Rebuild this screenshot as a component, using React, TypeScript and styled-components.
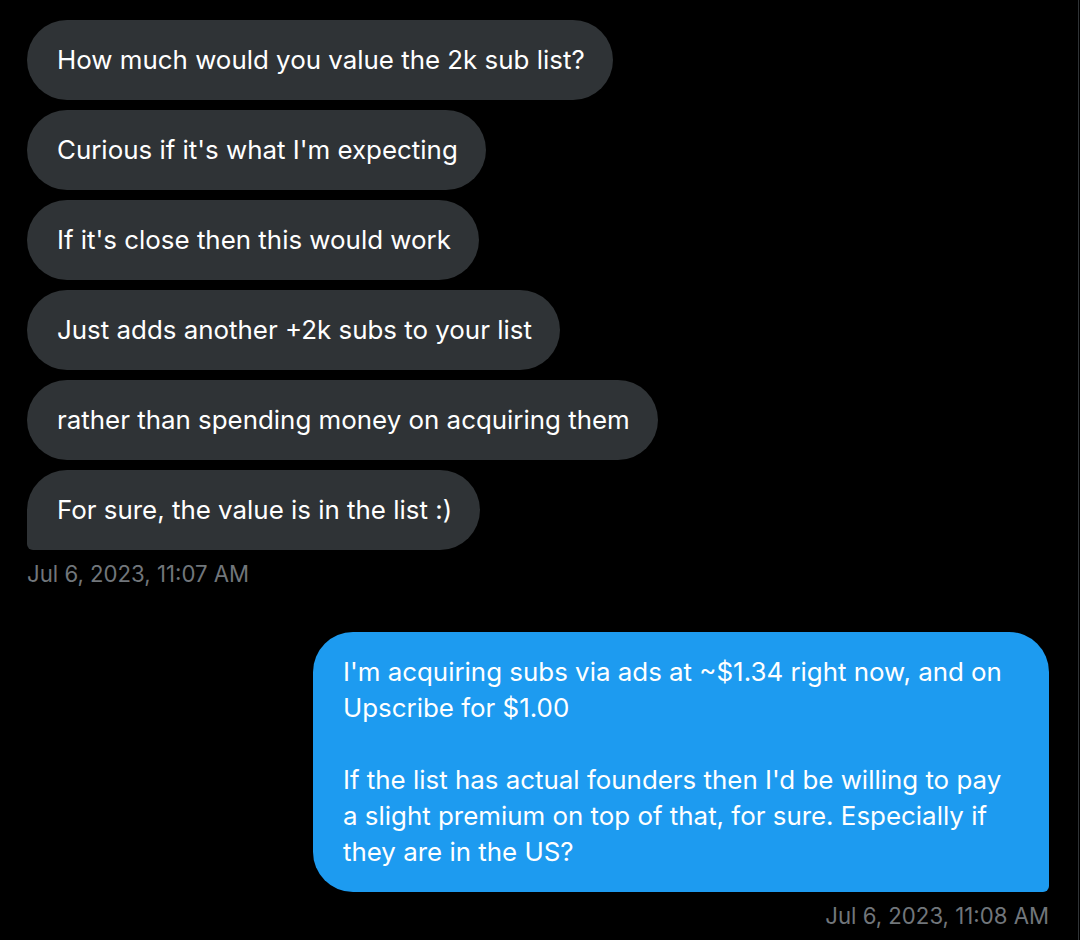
import React from "react";
import styled, { createGlobalStyle } from "styled-components";

const GlobalStyle = createGlobalStyle`
  html, body {
    margin: 0;
    padding: 0;
    background: #000;
  }
  body {
    font-family: Inter, "Noto Sans", "Liberation Sans", sans-serif;
    -webkit-font-smoothing: antialiased;
  }
`;

const Thread = styled.div`
  box-sizing: border-box;
  width: 1079px;
  height: 940px;
  padding: 20px 29px 0 27px;
  border-right: 1px solid #2f3336;
  display: flex;
  flex-direction: column;
  overflow: hidden;
`;

const Group = styled.div<{ $mine?: boolean }>`
  display: flex;
  flex-direction: column;
  align-items: ${(p) => (p.$mine ? "flex-end" : "flex-start")};
  gap: 10px;
  margin-top: ${(p) => (p.$mine ? "44px" : "0")};
`;

const Bubble = styled.div<{ $mine?: boolean; $last?: boolean }>`
  box-sizing: border-box;
  padding: 22px 28px 22px 30px;
  font-size: 25.9px;
  line-height: 36px;
  color: #fff;
  white-space: pre-line;
  background: ${(p) => (p.$mine ? "#1d9bf0" : "#2f3336")};
  border-radius: ${(p) =>
    p.$mine ? "40px 40px 6px 40px" : p.$last ? "40px 40px 40px 6px" : "40px"};
`;

const Stamp = styled.div<{ $mine?: boolean }>`
  margin-top: ${(p) => (p.$mine ? "0" : "10px")};
  font-size: 22.2px;
  line-height: 28px;
  color: #71767b;
`;

const incoming = [
  "How much would you value the 2k sub list?",
  "Curious if it's what I'm expecting",
  "If it's close then this would work",
  "Just adds another +2k subs to your list",
  "rather than spending money on acquiring them",
  "For sure, the value is in the list :)",
];

const reply =
  "I'm acquiring subs via ads at ~$1.34 right now, and on\nUpscribe for $1.00\n\nIf the list has actual founders then I'd be willing to pay\na slight premium on top of that, for sure. Especially if\nthey are in the US?";

export default function App() {
  return (
    <>
      <GlobalStyle />
      <Thread>
        <Group>
          {incoming.map((t, i) => (
            <Bubble key={i} $last={i === incoming.length - 1}>
              {t}
            </Bubble>
          ))}
        </Group>
        <Stamp>Jul 6, 2023, 11:07 AM</Stamp>
        <Group $mine>
          <Bubble $mine style={{ width: 736 }}>
            {reply}
          </Bubble>
          <Stamp $mine>Jul 6, 2023, 11:08 AM</Stamp>
        </Group>
      </Thread>
    </>
  );
}
